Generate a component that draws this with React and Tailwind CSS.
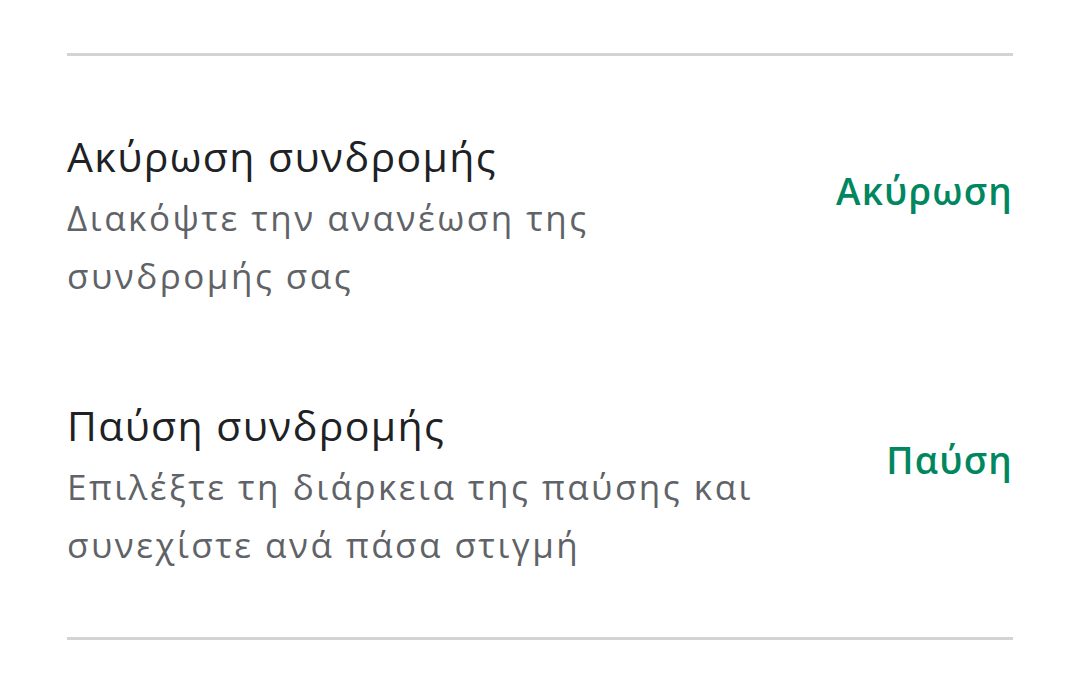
import React from "react";

const rows = [
  {
    title: "Ακύρωση συνδρομής",
    sub: ["Διακόψτε την ανανέωση της", "συνδρομής σας"],
    action: "Ακύρωση",
  },
  {
    title: "Παύση συνδρομής",
    sub: ["Επιλέξτε τη διάρκεια της παύσης και", "συνεχίστε ανά πάσα στιγμή"],
    action: "Παύση",
  },
];

const Row = ({ title, sub, action }) => (
  <div className="flex items-start justify-between">
    <div>
      <div className="text-[41px] leading-[58px] tracking-[1.4px] text-[#202124]">{title}</div>
      <div className="mt-[4px]">
        {sub.map((s) => (
          <div key={s} className="text-[35px] leading-[58px] tracking-[2.5px] text-[#5f6368]">
            {s}
          </div>
        ))}
      </div>
    </div>
    <div className="mt-[39px] text-[37px] leading-[50px] font-semibold tracking-[1.2px] text-[#01875f]">
      {action}
    </div>
  </div>
);

export default function App() {
  return (
    <div
      className="h-[685px] w-[1080px] bg-white px-[67px] pt-[53px]"
      style={{ fontFamily: "'Open Sans', 'Noto Sans', sans-serif" }}
    >
      <div className="h-[3px] bg-[#d3d3d3]" />
      <div className="flex flex-col gap-[91px] pt-[71px] pb-[63px]">
        {rows.map((r) => (
          <Row key={r.title} {...r} />
        ))}
      </div>
      <div className="h-[3px] bg-[#d3d3d3]" />
    </div>
  );
}
